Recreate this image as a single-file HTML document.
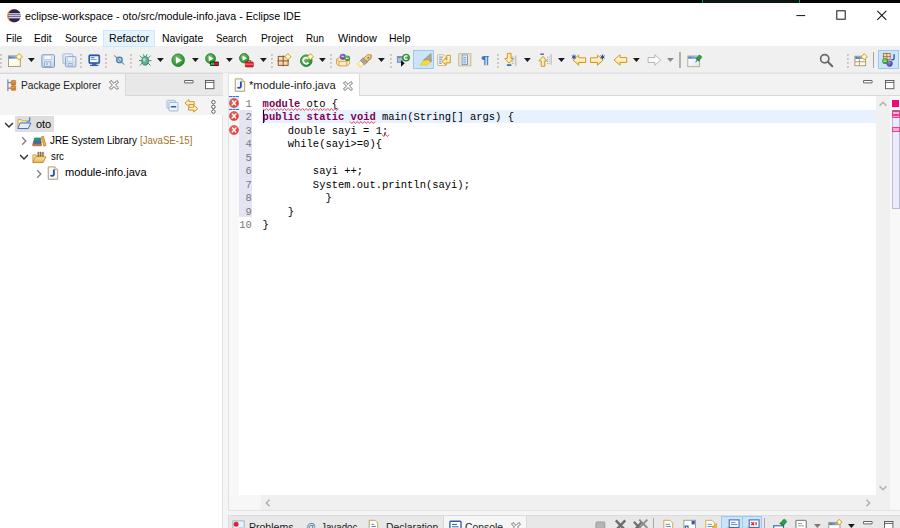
<!DOCTYPE html>
<html><head><meta charset="utf-8"><title>eclipse-workspace - oto/src/module-info.java - Eclipse IDE</title>
<style>
html,body{margin:0;padding:0;}
body{width:900px;height:528px;overflow:hidden;position:relative;background:#f0f0f0;font-family:'Liberation Sans', sans-serif;}
.a{position:absolute;}
.t{position:absolute;white-space:nowrap;line-height:14px;transform-origin:0 0;display:inline-block;font-family:'Liberation Sans', sans-serif;}
.cl{position:absolute;left:262.6px;white-space:pre;font:10.47px/13.44px 'Liberation Mono', monospace;color:#000;height:13.44px;}
.cl b{color:#7f0055;font-weight:bold;}
.ln{position:absolute;left:236.5px;width:15.4px;text-align:right;white-space:pre;font:10.47px/13.44px 'Liberation Mono', monospace;color:#787878;height:13.44px;}
.sq{text-decoration:underline wavy #e8203c;text-decoration-thickness:0.8px;text-underline-offset:1.5px;text-decoration-skip-ink:none;}
svg{position:absolute;overflow:visible;}
</style></head><body>
<!-- top black strip -->
<div class="a" style="left:0;top:0;width:900px;height:2.8px;background:#050505"></div>
<div class="a" style="left:702px;top:0;width:98px;height:2.8px;background:#0a1610;border-left:1px solid #0c9a3c;border-right:1px solid #0c9a3c;box-sizing:border-box"></div>
<!-- title + menu -->
<div class="a" style="left:0;top:2.8px;width:900px;height:43.4px;background:#fff"></div>
<!-- toolbar -->
<div class="a" style="left:0;top:46.2px;width:900px;height:26.6px;background:#f0f0f0"></div>
<div class="a" style="left:0;top:72.3px;width:900px;height:1px;background:#e6e6e6"></div>
<div class="a" style="left:0;top:73px;width:900px;height:460px;background:#f5f5f5"></div>
<div class="a" style="left:103.3px;top:29.6px;width:51.6px;height:17.2px;background:#e5f3ff;border:1px solid #cce8ff;box-sizing:border-box"></div>
<!-- left panel -->
<div class="a" style="left:0;top:73.3px;width:223.4px;height:460px;background:#fff;border-right:1px solid #e0e0e0;box-sizing:border-box"></div>
<div class="a" style="left:0;top:73.3px;width:222.6px;height:22.4px;background:#e8e8e8;border-bottom:1px solid #d9d9d9;border-top:1px solid #d9d9d9;box-sizing:border-box"></div>
<div class="a" style="left:0;top:73.3px;width:125.7px;height:22.6px;background:#f4f4f4;border-right:1px solid #d9d9d9;border-top:1px solid #d9d9d9;box-sizing:border-box"></div>
<div class="a" style="left:0;top:95.7px;width:222.6px;height:19.6px;background:#f4f4f4"></div>
<div class="a" style="left:15.1px;top:116.1px;width:38.9px;height:15.7px;background:#dedede"></div>
<!-- editor panel -->
<div class="a" style="left:228px;top:73.3px;width:680px;height:437.4px;background:#fff;border:1px solid #e2e2e2;box-sizing:border-box"></div>
<div class="a" style="left:229px;top:74.3px;width:680px;height:21.4px;background:#f2f2f2;border-bottom:1px solid #d9d9d9;box-sizing:border-box"></div>
<div class="a" style="left:229px;top:74.3px;width:131.3px;height:22px;background:#fff;border-right:1px solid #d9d9d9;box-sizing:border-box"></div>
<div class="a" style="left:229px;top:96.2px;width:10px;height:413.6px;background:#f8f8f8"></div>
<div class="a" style="left:239px;top:109.74px;width:12.7px;height:107.52px;background:#e4e4f4"></div>
<div class="a" style="left:261.5px;top:109.74px;width:614px;height:13.44px;background:#e8f2fe"></div>
<div class="a" style="left:262.6px;top:110.34px;width:1px;height:12.24px;background:#000"></div>
<!-- scrollbars -->
<div class="a" style="left:875.6px;top:96.2px;width:14.6px;height:414px;background:#f0f0f0"></div>
<div class="a" style="left:261.2px;top:495.2px;width:629px;height:15px;background:#f0f0f0"></div>
<div class="a" style="left:890.2px;top:96.2px;width:10px;height:414px;background:#f8f8f8"></div>
<div class="a" style="left:229px;top:495.2px;width:32.2px;height:15px;background:#f7f7f7"></div>
<!-- overview ruler -->
<div class="a" style="left:892.4px;top:100.2px;width:6.6px;height:6.4px;background:#f0087c"></div>
<div class="a" style="left:892px;top:110.4px;width:8px;height:98.2px;background:#ececf8;border-left:1px solid #b9b9e2;border-right:1px solid #b9b9e2;border-bottom:1px solid #b9b9e2;border-top:1px solid #777;box-sizing:border-box"></div>
<div class="a" style="left:892px;top:111.4px;width:8px;height:3.6px;background:#f9b4d6;border:1px solid #f23a98;box-sizing:border-box"></div>
<div class="a" style="left:892px;top:114.9px;width:8px;height:3.6px;background:#f9b4d6;border:1px solid #f23a98;box-sizing:border-box"></div>
<div class="a" style="left:892px;top:127.3px;width:8px;height:4.5px;background:#f9b4d6;border:1px solid #f23a98;box-sizing:border-box"></div>
<!-- bottom panel -->
<div class="a" style="left:228px;top:514.6px;width:680px;height:20px;background:#e8e8e8;border:1px solid #dcdcdc;box-sizing:border-box"></div>
<div class="a" style="left:443.4px;top:515.6px;width:84px;height:20px;background:#f6f6f6;border-left:1px solid #d9d9d9;border-right:1px solid #d9d9d9;box-sizing:border-box"></div>
<div class="cl" style="top:98.00px"><b>module</b> oto {</div><div class="ln" style="top:98.00px">1</div><div class="cl" style="top:111.44px"><b>public</b> <b>static</b> <b>void</b> main(String[] args) {</div><div class="ln" style="top:111.44px">2</div><div class="cl" style="top:124.88px">    double sayi = 1;</div><div class="ln" style="top:124.88px">3</div><div class="cl" style="top:138.32px">    while(sayi&gt;=0){</div><div class="ln" style="top:138.32px">4</div><div class="cl" style="top:151.76px"></div><div class="ln" style="top:151.76px">5</div><div class="cl" style="top:165.20px">        sayi ++;</div><div class="ln" style="top:165.20px">6</div><div class="cl" style="top:178.64px">        System.out.println(sayi);</div><div class="ln" style="top:178.64px">7</div><div class="cl" style="top:192.08px">          }</div><div class="ln" style="top:192.08px">8</div><div class="cl" style="top:205.52px">    }</div><div class="ln" style="top:205.52px">9</div><div class="cl" style="top:218.96px">}</div><div class="ln" style="top:218.96px">10</div>
<svg style="left:262.80px;top:107.70px" width="76.80" height="3"><polyline points="0.00,0.50 1.80,2.50 3.60,0.50 5.40,2.50 7.20,0.50 9.00,2.50 10.80,0.50 12.60,2.50 14.40,0.50 16.20,2.50 18.00,0.50 19.80,2.50 21.60,0.50 23.40,2.50 25.20,0.50 27.00,2.50 28.80,0.50 30.60,2.50 32.40,0.50 34.20,2.50 36.00,0.50 37.80,2.50 39.60,0.50 41.40,2.50 43.20,0.50 45.00,2.50 46.80,0.50 48.60,2.50 50.40,0.50 52.20,2.50 54.00,0.50 55.80,2.50 57.60,0.50 59.40,2.50 61.20,0.50 63.00,2.50 64.80,0.50 66.60,2.50 68.40,0.50 70.20,2.50 72.00,0.50 73.80,2.50 75.60,0.50" fill="none" stroke="#e4304c" stroke-width="0.85"/></svg><svg style="left:350.20px;top:120.70px" width="27.20" height="3"><polyline points="0.00,0.50 1.80,2.50 3.60,0.50 5.40,2.50 7.20,0.50 9.00,2.50 10.80,0.50 12.60,2.50 14.40,0.50 16.20,2.50 18.00,0.50 19.80,2.50 21.60,0.50 23.40,2.50 25.20,0.50" fill="none" stroke="#e4304c" stroke-width="0.85"/></svg><svg style="left:381.80px;top:134.40px" width="8.80" height="3"><polyline points="0.00,0.50 1.80,2.50 3.60,0.50 5.40,2.50 7.20,0.50" fill="none" stroke="#e4304c" stroke-width="0.85"/></svg>
<span class="t" style="left:25.40px;top:9.49px;font-size:10.7px;color:#000;transform:scaleX(1.0014);">eclipse-workspace - oto/src/module-info.java - Eclipse IDE</span><span class="t" style="left:5.50px;top:31.29px;font-size:10.7px;color:#000;transform:scaleX(0.9284);">File</span><span class="t" style="left:34.25px;top:31.29px;font-size:10.7px;color:#000;transform:scaleX(0.9500);">Edit</span><span class="t" style="left:64.50px;top:31.29px;font-size:10.7px;color:#000;transform:scaleX(0.9520);">Source</span><span class="t" style="left:109.25px;top:31.29px;font-size:10.7px;color:#000;transform:scaleX(0.9899);">Refactor</span><span class="t" style="left:161.75px;top:31.29px;font-size:10.7px;color:#000;transform:scaleX(0.9778);">Navigate</span><span class="t" style="left:216.25px;top:31.29px;font-size:10.7px;color:#000;transform:scaleX(0.9077);">Search</span><span class="t" style="left:260.50px;top:31.29px;font-size:10.7px;color:#000;transform:scaleX(0.9620);">Project</span><span class="t" style="left:306.25px;top:31.29px;font-size:10.7px;color:#000;transform:scaleX(0.9179);">Run</span><span class="t" style="left:337.50px;top:31.29px;font-size:10.7px;color:#000;transform:scaleX(1.0193);">Window</span><span class="t" style="left:389.25px;top:31.29px;font-size:10.7px;color:#000;transform:scaleX(0.9780);">Help</span><span class="t" style="left:20.90px;top:78.29px;font-size:10.7px;color:#222;transform:scaleX(0.9495);">Package Explorer</span><span class="t" style="left:36.00px;top:116.79px;font-size:10.7px;color:#000;transform:scaleX(1.0229);">oto</span><span class="t" style="left:49.90px;top:133.29px;font-size:10.7px;color:#000;transform:scaleX(0.9212);">JRE System Library</span><span class="t" style="left:140.00px;top:133.29px;font-size:10.7px;color:#a0742c;transform:scaleX(0.8983);">[JavaSE-15]</span><span class="t" style="left:50.60px;top:149.29px;font-size:10.7px;color:#000;transform:scaleX(0.9123);">src</span><span class="t" style="left:64.70px;top:165.29px;font-size:10.7px;color:#000;transform:scaleX(1.0405);">module-info.java</span><span class="t" style="left:249.00px;top:78.29px;font-size:10.7px;color:#222;transform:scaleX(1.0499);">*module-info.java</span><span class="t" style="left:249.20px;top:519.89px;font-size:10.7px;color:#222;transform:scaleX(0.9836);">Problems</span><span class="t" style="left:306.00px;top:519.89px;font-size:10.7px;color:#3a6ea5;transform:scaleX(0.8932);font-style:italic;">@</span><span class="t" style="left:321.40px;top:519.89px;font-size:10.7px;color:#222;transform:scaleX(0.9143);">Javadoc</span><span class="t" style="left:386.00px;top:519.89px;font-size:10.7px;color:#222;transform:scaleX(0.9674);">Declaration</span><span class="t" style="left:465.00px;top:519.89px;font-size:10.7px;color:#222;transform:scaleX(0.9689);">Console</span>
<svg width="0" height="0" style="left:0;top:0"><defs>
<linearGradient id="gY" x1="0" y1="0" x2="0" y2="1"><stop offset="0.1" stop-color="#fffdf0"/><stop offset="1" stop-color="#fcdc7c"/></linearGradient>
<linearGradient id="gYh" x1="0" y1="0" x2="1" y2="0"><stop offset="0.1" stop-color="#fffdf0"/><stop offset="1" stop-color="#fcd466"/></linearGradient>
<linearGradient id="gB" x1="0" y1="0" x2="1" y2="0"><stop offset="0" stop-color="#3b79c4"/><stop offset="1" stop-color="#9cc3ea"/></linearGradient>
<linearGradient id="gW" x1="0" y1="0" x2="1" y2="1"><stop offset="0.3" stop-color="#ffffff"/><stop offset="1" stop-color="#fbf3d4"/></linearGradient>
<radialGradient id="gG" cx="0.4" cy="0.35" r="0.7"><stop offset="0" stop-color="#74c464"/><stop offset="1" stop-color="#238430"/></radialGradient>
<radialGradient id="gP" cx="0.4" cy="0.35" r="0.7"><stop offset="0" stop-color="#9a84d8"/><stop offset="1" stop-color="#4a2f98"/></radialGradient>
<radialGradient id="gR" cx="0.4" cy="0.35" r="0.8"><stop offset="0" stop-color="#ec6a60"/><stop offset="1" stop-color="#d2362e"/></radialGradient>
<linearGradient id="gW2" x1="0" y1="0" x2="1" y2="1"><stop offset="0.2" stop-color="#ffffff"/><stop offset="1" stop-color="#d4e8f8"/></linearGradient>
<linearGradient id="gF" x1="0" y1="0" x2="0" y2="1"><stop offset="0" stop-color="#fde9a8"/><stop offset="1" stop-color="#e8b04c"/></linearGradient>
<linearGradient id="gS" x1="0" y1="0" x2="0" y2="1"><stop offset="0" stop-color="#eaf1f9"/><stop offset="1" stop-color="#c4d6ea"/></linearGradient>
</defs></svg>
<svg style="left:6.40px;top:7.60px" width="15.52" height="15.52" viewBox="0 0 16 16"><circle cx="8" cy="8" r="7" fill="#f7941e"/><circle cx="8.7" cy="8" r="6.7" fill="#2c2255"/><rect x="2.4" y="5.5" width="13.2" height="1.1" fill="#fff"/><rect x="2.2" y="7.5" width="13.4" height="1.1" fill="#fff"/><rect x="2.4" y="9.5" width="13.2" height="1.1" fill="#fff"/></svg>
<svg style="left:790px;top:6px" width="110" height="20" viewBox="0 0 110 20"><line x1="6.4" y1="9.6" x2="15.2" y2="9.6" stroke="#111" stroke-width="1"/><rect x="46.8" y="4.8" width="8.4" height="8.4" fill="none" stroke="#111" stroke-width="1"/><path d="M87.3,4.9 L96.3,13.9 M96.3,4.9 L87.3,13.9" stroke="#111" stroke-width="1.05"/></svg>
<svg style="left:0.20px;top:53.50px" width="2" height="14.4" viewBox="0 0 2 14.4"><rect x="0" y="0.0" width="1.8" height="1.9" fill="#cbc2b0"/><rect x="0" y="4.0" width="1.8" height="1.9" fill="#cbc2b0"/><rect x="0" y="8.0" width="1.8" height="1.9" fill="#cbc2b0"/><rect x="0" y="12.0" width="1.8" height="1.9" fill="#cbc2b0"/></svg>
<svg style="left:7.60px;top:53.40px" width="14.34" height="14.34" viewBox="0 0 16 16"><rect x="0.6" y="3.2" width="13.2" height="11.8" fill="url(#gW)" stroke="#a89468" stroke-width="1"/><rect x="1.1" y="3.7" width="12.2" height="2.6" fill="url(#gB)"/><path d="M12.4,0.41999999999999993 L14.101,2.499 L16.18,4.2 L14.101,5.901 L12.4,7.98 L10.699,5.901 L8.620000000000001,4.2 L10.699,2.499Z" fill="#fff1a8" stroke="#c9a030" stroke-width="1"/><path d="M12.4,1.932 L13.2316,4.2 L12.4,6.468 L11.5684,4.2Z" fill="#fffef4"/></svg>
<svg style="left:27.60px;top:58.00px" width="6.8" height="4" viewBox="0 0 7 4"><path d="M0,0 L7,0 L3.5,4Z" fill="#1a1a1a"/></svg>
<svg style="left:41.30px;top:53.40px" width="14.34" height="14.34" viewBox="0 0 16 16"><g transform="translate(0.5,1.5)" opacity="1"><path d="M0.5,1.5 q0,-1 1,-1 h12 q1,0 1,1 v12 q0,1 -1,1 h-12 q-1,0 -1,-1z" fill="url(#gS)" stroke="#7295c6" stroke-width="1.1"/><rect x="2.8" y="1" width="8.4" height="4.6" fill="#f6f9fd" stroke="#a9c0dc" stroke-width="0.7"/><rect x="3.6" y="8.4" width="6.8" height="5.1" fill="#dfe9f5" stroke="#7f9fc6" stroke-width="0.8"/><rect x="5.4" y="9.6" width="1.8" height="2.6" fill="#9db6d6"/></g></svg>
<svg style="left:61.60px;top:53.40px" width="14.34" height="14.34" viewBox="0 0 16 16"><g transform="translate(0.5,0.5)" opacity="0.6"><path d="M0.5,1.5 q0,-1 1,-1 h9 q1,0 1,1 v9 q0,1 -1,1 h-9 q-1,0 -1,-1z" fill="url(#gS)" stroke="#7295c6" stroke-width="1.1"/><rect x="2.8" y="1" width="5.4" height="4.6" fill="#f6f9fd" stroke="#a9c0dc" stroke-width="0.7"/><rect x="3.6" y="8.4" width="3.8" height="2.0999999999999996" fill="#dfe9f5" stroke="#7f9fc6" stroke-width="0.8"/><rect x="5.4" y="9.6" width="1.8" height="2.6" fill="#9db6d6"/></g><g transform="translate(3.5,3.5)" opacity="0.8"><path d="M0.5,1.5 q0,-1 1,-1 h9.5 q1,0 1,1 v9.5 q0,1 -1,1 h-9.5 q-1,0 -1,-1z" fill="url(#gS)" stroke="#7295c6" stroke-width="1.1"/><rect x="2.8" y="1" width="5.9" height="4.6" fill="#f6f9fd" stroke="#a9c0dc" stroke-width="0.7"/><rect x="3.6" y="8.4" width="4.3" height="2.5999999999999996" fill="#dfe9f5" stroke="#7f9fc6" stroke-width="0.8"/><rect x="5.4" y="9.6" width="1.8" height="2.6" fill="#9db6d6"/></g></svg>
<svg style="left:80.40px;top:53.50px" width="2" height="14.4" viewBox="0 0 2 14.4"><rect x="0" y="0.0" width="1.8" height="1.9" fill="#cbc2b0"/><rect x="0" y="4.0" width="1.8" height="1.9" fill="#cbc2b0"/><rect x="0" y="8.0" width="1.8" height="1.9" fill="#cbc2b0"/><rect x="0" y="12.0" width="1.8" height="1.9" fill="#cbc2b0"/></svg>
<svg style="left:87.60px;top:53.70px" width="14.34" height="14.34" viewBox="0 0 16 16"><g transform="scale(0.9,0.97)"><rect x="1" y="1" width="13.5" height="10" rx="1.3" fill="#2f62ad" stroke="#1f4a8c" stroke-width="0.8"/><rect x="2.6" y="2.6" width="10.3" height="6.8" fill="#f4f8fd"/><rect x="3.6" y="3.8" width="4.4" height="1" fill="#2f62ad"/><rect x="3.6" y="5.8" width="7" height="1" fill="#6c93c9"/><rect x="5" y="11" width="5.5" height="1.4" fill="#1f4a8c"/><rect x="2.6" y="12.4" width="10.3" height="1.5" fill="#2f62ad"/></g></svg>
<svg style="left:105.40px;top:53.50px" width="2" height="14.4" viewBox="0 0 2 14.4"><rect x="0" y="0.0" width="1.8" height="1.9" fill="#cbc2b0"/><rect x="0" y="4.0" width="1.8" height="1.9" fill="#cbc2b0"/><rect x="0" y="8.0" width="1.8" height="1.9" fill="#cbc2b0"/><rect x="0" y="12.0" width="1.8" height="1.9" fill="#cbc2b0"/></svg>
<svg style="left:112.60px;top:53.40px" width="14.34" height="14.34" viewBox="0 0 16 16"><circle cx="7.2" cy="7.7" r="3.0" fill="#d6e6f6" stroke="#3f80c0" stroke-width="1.6"/><line x1="1.3" y1="2.7" x2="12.7" y2="13" stroke="#8a8a8a" stroke-width="1.25"/></svg>
<svg style="left:130.40px;top:53.50px" width="2" height="14.4" viewBox="0 0 2 14.4"><rect x="0" y="0.0" width="1.8" height="1.9" fill="#cbc2b0"/><rect x="0" y="4.0" width="1.8" height="1.9" fill="#cbc2b0"/><rect x="0" y="8.0" width="1.8" height="1.9" fill="#cbc2b0"/><rect x="0" y="12.0" width="1.8" height="1.9" fill="#cbc2b0"/></svg>
<svg style="left:137.60px;top:53.40px" width="14.34" height="14.34" viewBox="0 0 16 16"><g stroke="#3f8f73" stroke-width="1.1" fill="none"><path d="M2,3 L5,6 M14,3 L11,6 M1,8.5 H4.5 M15,8.5 H11.5 M2,14 L5,11 M14,14 L11,11 M6,1.5 L7,4 M10,1.5 L9,4"/></g><ellipse cx="8" cy="8.8" rx="3.7" ry="4.8" fill="#5fae8f" stroke="#2f7d62" stroke-width="0.9"/><ellipse cx="7" cy="7.6" rx="1.6" ry="2.4" fill="#bfe3d2" opacity="0.8"/></svg>
<svg style="left:157.40px;top:58.00px" width="6.8" height="4" viewBox="0 0 7 4"><path d="M0,0 L7,0 L3.5,4Z" fill="#1a1a1a"/></svg>
<svg style="left:171.20px;top:53.40px" width="14.34" height="14.34" viewBox="0 0 16 16"><circle cx="8" cy="8" r="7" fill="url(#gG)" stroke="#1d7a2a" stroke-width="0.9"/><path d="M5.48,4.08 L12.2,8 L5.48,11.92Z" fill="#fff"/></svg>
<svg style="left:191.60px;top:58.00px" width="6.8" height="4" viewBox="0 0 7 4"><path d="M0,0 L7,0 L3.5,4Z" fill="#1a1a1a"/></svg>
<svg style="left:204.80px;top:53.40px" width="14.34" height="14.34" viewBox="0 0 16 16"><circle cx="6.2" cy="6.2" r="5.5" fill="url(#gG)" stroke="#1d7a2a" stroke-width="0.9"/><path d="M4.220000000000001,3.12 L9.5,6.2 L4.220000000000001,9.280000000000001Z" fill="#fff"/><rect x="5.8" y="9.6" width="9.6" height="4.8" fill="#1a1a1a"/><rect x="6.6" y="10.6" width="3.6" height="2.8" fill="#2fbe3a"/><rect x="10.2" y="10.6" width="4.4" height="2.8" fill="#e8101a"/></svg>
<svg style="left:226.00px;top:58.00px" width="6.8" height="4" viewBox="0 0 7 4"><path d="M0,0 L7,0 L3.5,4Z" fill="#1a1a1a"/></svg>
<svg style="left:238.80px;top:53.40px" width="14.34" height="14.34" viewBox="0 0 16 16"><circle cx="5.8" cy="5.8" r="5.2" fill="url(#gG)" stroke="#1d7a2a" stroke-width="0.9"/><path d="M3.928,2.8879999999999995 L8.92,5.8 L3.928,8.712Z" fill="#fff"/><rect x="7" y="10" width="9" height="5.6" rx="0.8" fill="#e0242c" stroke="#a81018" stroke-width="0.7"/><path d="M9.8,10 v-1.4 h3.4 v1.4" fill="none" stroke="#a81018" stroke-width="1"/><rect x="7" y="12" width="9" height="0.9" fill="#f7a0a0"/></svg>
<svg style="left:260.00px;top:58.00px" width="6.8" height="4" viewBox="0 0 7 4"><path d="M0,0 L7,0 L3.5,4Z" fill="#1a1a1a"/></svg>
<svg style="left:271.00px;top:53.50px" width="2" height="14.4" viewBox="0 0 2 14.4"><rect x="0" y="0.0" width="1.8" height="1.9" fill="#cbc2b0"/><rect x="0" y="4.0" width="1.8" height="1.9" fill="#cbc2b0"/><rect x="0" y="8.0" width="1.8" height="1.9" fill="#cbc2b0"/><rect x="0" y="12.0" width="1.8" height="1.9" fill="#cbc2b0"/></svg>
<svg style="left:277.40px;top:53.40px" width="14.34" height="14.34" viewBox="0 0 16 16"><rect x="1.4" y="3.8" width="11" height="10" fill="#f3dcae" stroke="#8e5230" stroke-width="1.1"/><path d="M6.9,2.8 v12 M0.4,8.8 h13" stroke="#8e5230" stroke-width="1.1" fill="none"/><path d="M12.2,0.528 L13.8524,2.5476 L15.872,4.2 L13.8524,5.8524 L12.2,7.872 L10.5476,5.8524 L8.527999999999999,4.2 L10.5476,2.5476Z" fill="#fff1a8" stroke="#c9a030" stroke-width="1"/><path d="M12.2,1.9968000000000004 L13.00784,4.2 L12.2,6.4032 L11.392159999999999,4.2Z" fill="#fffef4"/></svg>
<svg style="left:299.60px;top:53.40px" width="14.34" height="14.34" viewBox="0 0 16 16"><circle cx="7" cy="8.6" r="6.5" fill="url(#gG)" stroke="#1d7a2a" stroke-width="0.9"/><path d="M9.6,6.5 A3.4,3.4 0 1 0 9.6,10.7" fill="none" stroke="#fff" stroke-width="2"/><path d="M11.6,0.6360000000000001 L13.2038,2.5962 L15.164,4.2 L13.2038,5.803800000000001 L11.6,7.764 L9.9962,5.803800000000001 L8.036,4.2 L9.9962,2.5962Z" fill="#fff1a8" stroke="#c9a030" stroke-width="1"/><path d="M11.6,2.0616000000000003 L12.384079999999999,4.2 L11.6,6.3384 L10.81592,4.2Z" fill="#fffef4"/></svg>
<svg style="left:319.20px;top:58.00px" width="6.8" height="4" viewBox="0 0 7 4"><path d="M0,0 L7,0 L3.5,4Z" fill="#1a1a1a"/></svg>
<svg style="left:330.40px;top:53.50px" width="2" height="14.4" viewBox="0 0 2 14.4"><rect x="0" y="0.0" width="1.8" height="1.9" fill="#cbc2b0"/><rect x="0" y="4.0" width="1.8" height="1.9" fill="#cbc2b0"/><rect x="0" y="8.0" width="1.8" height="1.9" fill="#cbc2b0"/><rect x="0" y="12.0" width="1.8" height="1.9" fill="#cbc2b0"/></svg>
<svg style="left:336.00px;top:53.40px" width="14.34" height="14.34" viewBox="0 0 16 16"><path d="M0.6,7 l3.4,-2.4 h8.6 l2.4,2.4 v5.2 l-3,2.2 h-8.6 l-2.8,-2.2z" fill="#fdebc0" stroke="#d59a44" stroke-width="1" stroke-linejoin="round"/><path d="M0.6,7 l2.8,2.4 h8.6 l3,-2.4 M3.4,9.4 v5 M12,9.4 v5" fill="none" stroke="#d59a44" stroke-width="0.9"/><circle cx="7.6" cy="4.2" r="3.4" fill="url(#gP)"/><circle cx="12.6" cy="6" r="3.1" fill="url(#gG)"/><rect x="11" y="5.5" width="3.2" height="0.9" fill="#e8ffe8"/><rect x="6" y="3.7" width="3.2" height="0.9" fill="#eee8ff"/></svg>
<svg style="left:357.60px;top:53.40px" width="14.34" height="14.34" viewBox="0 0 16 16"><g transform="rotate(-40 8 8)"><rect x="-1" y="5.6" width="5" height="4.8" fill="#fff9c8" stroke="#e8c23c" stroke-width="0.8"/><rect x="4" y="4.6" width="4.2" height="6.8" fill="#aaa6a2" stroke="#86827c" stroke-width="0.7"/><path d="M8.2,5.2 h6 l2.8,2.8 l-2.8,2.8 h-6z" fill="url(#gF)" stroke="#b07a22" stroke-width="0.9"/><circle cx="12.4" cy="8" r="1" fill="#3f7ac0"/></g></svg>
<svg style="left:378.20px;top:58.00px" width="6.8" height="4" viewBox="0 0 7 4"><path d="M0,0 L7,0 L3.5,4Z" fill="#1a1a1a"/></svg>
<svg style="left:389.60px;top:53.50px" width="2" height="14.4" viewBox="0 0 2 14.4"><rect x="0" y="0.0" width="1.8" height="1.9" fill="#cbc2b0"/><rect x="0" y="4.0" width="1.8" height="1.9" fill="#cbc2b0"/><rect x="0" y="8.0" width="1.8" height="1.9" fill="#cbc2b0"/><rect x="0" y="12.0" width="1.8" height="1.9" fill="#cbc2b0"/></svg>
<svg style="left:396.00px;top:53.40px" width="14.34" height="14.34" viewBox="0 0 16 16"><rect x="1.5" y="5" width="6" height="5.4" fill="#a9bfe0" stroke="#5d7fb8" stroke-width="0.9"/><rect x="1" y="3.4" width="7" height="1.8" fill="#7d8aa8"/><path d="M5.6,8 v7.4 l4.2,-3.9z" fill="#111"/><circle cx="11.2" cy="5.2" r="4" fill="url(#gG)" stroke="#1d7a2a" stroke-width="0.7"/><path d="M12.8,3.9 A2,2 0 1 0 12.8,6.5" fill="none" stroke="#fff" stroke-width="1.3"/></svg>
<div class="a" style="left:413.20px;top:50.20px;width:20.80px;height:18.80px;background:#cce4f7;border:1px solid #99c9ef;box-sizing:border-box"></div>
<svg style="left:416.60px;top:53.40px" width="14.34" height="14.34" viewBox="0 0 16 16"><path d="M0.9,13.9 L5,13 L6.4,14.4 Z" fill="#f3d23a"/><path d="M4.3,12.9 L7,8.1 L13.2,7.4 L15.2,10.2 L11.1,13.8 Z" fill="#f7da3e" stroke="#e0bc20" stroke-width="0.6" stroke-linejoin="round"/><path d="M7,8.1 L15.7,0.4 L16.2,9.4 L15.2,10.2 L13.2,7.4 Z" fill="#aea892" stroke="#918a74" stroke-width="0.6" stroke-linejoin="round"/></svg>
<svg style="left:436.80px;top:53.40px" width="14.34" height="14.34" viewBox="0 0 16 16"><path d="M0.8,2 h7 l2.2,2.2 v9.8 h-9.2z" fill="#fbf6e6" stroke="#c4b07c" stroke-width="0.9"/><path d="M2.4,4.6 h4.6 M2.4,6.9 h3.4 M2.4,9.2 h2.4 M2.4,11.5 h3" stroke="#5d86c4" stroke-width="1"/><path d="M11,2.6 h3.8 v8.4 h-4.6 v2.4 l-4.8,-4 l4.8,-4 v2.4 h0.8z" fill="url(#gY)" stroke="#d0941c" stroke-width="1.1" stroke-linejoin="round"/></svg>
<svg style="left:457.60px;top:53.40px" width="14.34" height="14.34" viewBox="0 0 16 16"><rect x="0.8" y="0.8" width="13.6" height="13.6" fill="#f2ead2" stroke="#c2ae7c" stroke-width="0.9"/><rect x="4.6" y="2.2" width="6" height="10.8" fill="#fdfdff" stroke="#5d86c4" stroke-width="0.9"/><path d="M2.4,2.4 v10.6 M12.8,2.4 v10.6" stroke="#c9d6ea" stroke-width="1" stroke-dasharray="1.2 1"/><path d="M5.8,4.8 h3.6 M5.8,6.9 h3.6 M5.8,9 h3.6 M5.8,11.1 h3.6" stroke="#5d86c4" stroke-width="1"/></svg>
<span class="a" style="left:480.8px;top:53.4px;font:bold 11.6px/14px 'Liberation Sans',sans-serif;color:#3a76bd;transform:scaleX(1.3);transform-origin:0 0">¶</span>
<svg style="left:497.00px;top:53.50px" width="2" height="14.4" viewBox="0 0 2 14.4"><rect x="0" y="0.0" width="1.8" height="1.9" fill="#cbc2b0"/><rect x="0" y="4.0" width="1.8" height="1.9" fill="#cbc2b0"/><rect x="0" y="8.0" width="1.8" height="1.9" fill="#cbc2b0"/><rect x="0" y="12.0" width="1.8" height="1.9" fill="#cbc2b0"/></svg>
<svg style="left:503.60px;top:53.40px" width="14.34" height="14.34" viewBox="0 0 16 16"><path d="M8.6,4.6 h3 M8.6,7 h3 M8.6,9.4 h3 M8.6,11.8 h3" stroke="#8fa9d0" stroke-width="1" stroke-dasharray="1.4 0.8"/><rect x="12.6" y="2.6" width="1.2" height="12" fill="#b8b8b8"/><path d="M5.8,11.4 L0.8999999999999995,6.2 L3.6999999999999997,6.2 L3.6999999999999997,0.40000000000000036 L7.9,0.40000000000000036 L7.9,6.2 L10.7,6.2Z" fill="url(#gYh)" stroke="#d0941c" stroke-width="1.1" stroke-linejoin="round"/><rect x="3.2" y="12.6" width="5" height="1.8" fill="#2d5fa8"/></svg>
<svg style="left:524.00px;top:58.00px" width="6.8" height="4" viewBox="0 0 7 4"><path d="M0,0 L7,0 L3.5,4Z" fill="#1a1a1a"/></svg>
<svg style="left:537.60px;top:53.40px" width="14.34" height="14.34" viewBox="0 0 16 16"><g transform="translate(1.5,0)"><path d="M8.6,4.6 h3 M8.6,7 h3 M8.6,9.4 h3 M8.6,11.8 h3" stroke="#8fa9d0" stroke-width="1" stroke-dasharray="1.4 0.8"/><rect x="12.6" y="1" width="1.2" height="12" fill="#b8b8b8"/></g><path d="M5.6,3.8 L1.0,8.8 L3.5999999999999996,8.8 L3.5999999999999996,14.8 L7.6,14.8 L7.6,8.8 L10.2,8.8Z" fill="url(#gYh)" stroke="#d0941c" stroke-width="1.1" stroke-linejoin="round"/><rect x="2.6" y="0.6" width="4" height="1.5" fill="#2d5fa8"/></svg>
<svg style="left:558.00px;top:58.00px" width="6.8" height="4" viewBox="0 0 7 4"><path d="M0,0 L7,0 L3.5,4Z" fill="#1a1a1a"/></svg>
<svg style="left:570.60px;top:53.40px" width="14.34" height="14.34" viewBox="0 0 16 16"><path d="M2.4,8 L8.6,2.4000000000000004 L8.6,5.4 L16.4,5.4 L16.4,10.6 L8.6,10.6 L8.6,13.6Z" fill="url(#gY)" stroke="#d0941c" stroke-width="1.1" stroke-linejoin="round"/><line x1="3.20" y1="1.70" x2="3.20" y2="7.10" stroke="#2a4a8a" stroke-width="1.1"/><line x1="0.86" y1="3.05" x2="5.54" y2="5.75" stroke="#2a4a8a" stroke-width="1.1"/><line x1="5.54" y1="3.05" x2="0.86" y2="5.75" stroke="#2a4a8a" stroke-width="1.1"/></svg>
<svg style="left:590.20px;top:53.40px" width="14.34" height="14.34" viewBox="0 0 16 16"><path d="M14.6,8 L8.399999999999999,2.4000000000000004 L8.399999999999999,5.4 L0.5999999999999996,5.4 L0.5999999999999996,10.6 L8.399999999999999,10.6 L8.399999999999999,13.6Z" fill="url(#gY)" stroke="#d0941c" stroke-width="1.1" stroke-linejoin="round"/><line x1="14.00" y1="1.70" x2="14.00" y2="7.10" stroke="#2a4a8a" stroke-width="1.1"/><line x1="11.66" y1="3.05" x2="16.34" y2="5.75" stroke="#2a4a8a" stroke-width="1.1"/><line x1="16.34" y1="3.05" x2="11.66" y2="5.75" stroke="#2a4a8a" stroke-width="1.1"/></svg>
<svg style="left:612.60px;top:53.40px" width="14.34" height="14.34" viewBox="0 0 16 16"><path d="M1.2,7.8 L7.8,2.0 L7.8,5.1 L15.399999999999999,5.1 L15.399999999999999,10.5 L7.8,10.5 L7.8,13.6Z" fill="url(#gY)" stroke="#d0941c" stroke-width="1.1" stroke-linejoin="round"/></svg>
<svg style="left:633.20px;top:58.00px" width="6.8" height="4" viewBox="0 0 7 4"><path d="M0,0 L7,0 L3.5,4Z" fill="#1a1a1a"/></svg>
<svg style="left:647.00px;top:53.40px" width="14.34" height="14.34" viewBox="0 0 16 16"><path d="M15.4,7.8 L8.8,2.0 L8.8,5.1 L1.200000000000001,5.1 L1.200000000000001,10.5 L8.8,10.5 L8.8,13.6Z" fill="#fbfbfb" stroke="#b4b4b4" stroke-width="1.1" stroke-linejoin="round"/></svg>
<svg style="left:667.40px;top:58.00px" width="6.8" height="4" viewBox="0 0 7 4"><path d="M0,0 L7,0 L3.5,4Z" fill="#8a8a8a"/></svg>
<div class="a" style="left:679.00px;top:52.00px;width:1.6px;height:15.80px;background:#b2b2b2"></div>
<svg style="left:687.20px;top:53.40px" width="14.34" height="14.34" viewBox="0 0 16 16"><rect x="0.9" y="3.3" width="13" height="12" fill="url(#gW2)" stroke="#b8a878" stroke-width="1"/><rect x="1.4" y="3.8" width="12" height="2.6" fill="url(#gB)"/><g transform="translate(1.5,2.2) rotate(40 11.4 4)"><rect x="9.4" y="0.2" width="4" height="5" rx="1" fill="#2f9e44" stroke="#1b7a30" stroke-width="0.6"/><rect x="8.6" y="5" width="5.6" height="1.3" fill="#1b7a30"/><rect x="11" y="6.2" width="0.9" height="3" fill="#444"/></g></svg>
<svg style="left:818.60px;top:53.40px" width="14.34" height="14.34" viewBox="0 0 16 16"><circle cx="6.4" cy="6.4" r="4.6" fill="none" stroke="#6a6a6a" stroke-width="1.9"/><line x1="9.8" y1="9.8" x2="14.8" y2="14.8" stroke="#6a6a6a" stroke-width="2.3" stroke-linecap="round"/></svg>
<svg style="left:847.40px;top:53.50px" width="2" height="14.4" viewBox="0 0 2 14.4"><rect x="0" y="0.0" width="1.8" height="1.9" fill="#cbc2b0"/><rect x="0" y="4.0" width="1.8" height="1.9" fill="#cbc2b0"/><rect x="0" y="8.0" width="1.8" height="1.9" fill="#cbc2b0"/><rect x="0" y="12.0" width="1.8" height="1.9" fill="#cbc2b0"/></svg>
<svg style="left:853.60px;top:53.40px" width="14.34" height="14.34" viewBox="0 0 16 16"><rect x="1" y="3.6" width="12" height="10.6" fill="#fffdf0" stroke="#a89468" stroke-width="1"/><rect x="1.5" y="4.1" width="11" height="2.6" fill="url(#gB)"/><path d="M1,9.8 h12 M6,6.8 v7.4" stroke="#a89468" stroke-width="1"/><path d="M11.4,0.6360000000000001 L13.0038,2.5962 L14.964,4.2 L13.0038,5.803800000000001 L11.4,7.764 L9.7962,5.803800000000001 L7.836,4.2 L9.7962,2.5962Z" fill="#fff1a8" stroke="#c9a030" stroke-width="1"/><path d="M11.4,2.0616000000000003 L12.18408,4.2 L11.4,6.3384 L10.615920000000001,4.2Z" fill="#fffef4"/></svg>
<div class="a" style="left:873.00px;top:52.00px;width:1.3px;height:15.80px;background:#a4a4a4"></div>
<div class="a" style="left:878.00px;top:50.20px;width:20.80px;height:18.80px;background:#cce4f7;border:1px solid #99c9ef;box-sizing:border-box"></div>
<svg style="left:881.40px;top:53.40px" width="14.34" height="14.34" viewBox="0 0 16 16"><g transform="translate(1.8,-2.0) scale(0.68)"><rect x="1.4" y="3.8" width="11" height="10" fill="#f3dcae" stroke="#8e5230" stroke-width="1.1"/><path d="M6.9,2.8 v12 M0.4,8.8 h13" stroke="#8e5230" stroke-width="1.1" fill="none"/></g><path d="M14.6,1.4 v4.4 q0,1.8 -1.8,1.8 q-0.9,0 -1.3,-0.5" fill="none" stroke="#2d5fa8" stroke-width="1.6"/><circle cx="9.6" cy="11.8" r="3.5" fill="url(#gP)"/><circle cx="4.6" cy="9" r="3.4" fill="url(#gG)"/><rect x="2.8" y="8.6" width="3.4" height="0.9" fill="#e8ffe8"/></svg>
<svg style="left:6.60px;top:78.60px" width="14.34" height="14.34" viewBox="0 0 16 16"><path d="M1.0,0.4 v13.2 M1,4.1 h3.6 M1,10.2 h3.6" stroke="#6a7088" stroke-width="1.1" fill="none"/><rect x="4.7" y="1.6" width="5" height="5" rx="0.5" fill="#d08434" stroke="#b0641c" stroke-width="0.6"/><rect x="4.7" y="7.6" width="5" height="5" rx="0.5" fill="#d08434" stroke="#b0641c" stroke-width="0.6"/><path d="M4.9,3.3 h4.6 M4.9,9.3 h4.6" stroke="#e8a860" stroke-width="0.8"/></svg>
<svg style="left:107.90px;top:79.40px" width="12" height="12" viewBox="-6 -6 12 12"><path d="M-4.5,-2.95 L-2.95,-4.5 L0,-1.55 L2.95,-4.5 L4.5,-2.95 L1.55,0 L4.5,2.95 L2.95,4.5 L0,1.55 L-2.95,4.5 L-4.5,2.95 L-1.55,0Z" fill="#fdfdfd" stroke="#5c5c5c" stroke-width="0.9" stroke-linejoin="round"/></svg>
<svg style="left:184.40px;top:80.30px" width="10" height="4" viewBox="0 0 10 4"><rect x="0.5" y="0.5" width="8.6" height="2.4" rx="0.2" fill="#fff" stroke="#555" stroke-width="0.9"/></svg>
<svg style="left:205.00px;top:79.90px" width="10" height="10" viewBox="0 0 10 10"><rect x="0.5" y="0.5" width="8.4" height="8.2" fill="#fff" stroke="#555" stroke-width="0.9"/><line x1="0.5" y1="2.4" x2="8.9" y2="2.4" stroke="#555" stroke-width="0.9"/></svg>
<svg style="left:165.60px;top:99.40px" width="14.34" height="14.34" viewBox="0 0 16 16"><rect x="1" y="1.4" width="9.6" height="9" rx="1" fill="#dbe6f4" stroke="#9cb4d4" stroke-width="0.9"/><rect x="3.4" y="3.8" width="10" height="9.6" rx="1" fill="#eef4fb" stroke="#8fa9cf" stroke-width="0.9"/><rect x="5.4" y="7.8" width="6" height="1.7" fill="#2d5fa8"/></svg>
<svg style="left:184.40px;top:99.20px" width="14.34" height="14.34" viewBox="0 0 16 16"><path d="M1,4.6 L5.6,0.7999999999999998 L5.6,2.9999999999999996 L11.4,2.9999999999999996 L11.4,6.199999999999999 L5.6,6.199999999999999 L5.6,8.399999999999999Z" fill="url(#gY)" stroke="#d0941c" stroke-width="1.1" stroke-linejoin="round"/><path d="M15.4,10.8 L10.8,7.000000000000001 L10.8,9.200000000000001 L5.0,9.200000000000001 L5.0,12.4 L10.8,12.4 L10.8,14.600000000000001Z" fill="url(#gY)" stroke="#d0941c" stroke-width="1.1" stroke-linejoin="round"/></svg>
<svg style="left:209.6px;top:99.6px" width="7" height="14" viewBox="0 0 7 14"><g fill="#fff" stroke="#5a5a5a" stroke-width="1"><circle cx="3.4" cy="2.2" r="1.75"/><circle cx="3.4" cy="6.9" r="1.75"/><circle cx="3.4" cy="11.6" r="1.75"/></g></svg>
<svg style="left:3.30px;top:118.60px" width="12" height="12" viewBox="-6 -6 12 12"><polyline points="-3.9,-1.95 0,1.95 3.9,-1.95" fill="none" stroke="#333" stroke-width="1.5"/></svg>
<svg style="left:18.00px;top:135.40px" width="12" height="12" viewBox="-6 -6 12 12"><polyline points="-1.85,-3.7 1.85,0 -1.85,3.7" fill="none" stroke="#808080" stroke-width="1.3"/></svg>
<svg style="left:17.80px;top:150.80px" width="12" height="12" viewBox="-6 -6 12 12"><polyline points="-3.9,-1.95 0,1.95 3.9,-1.95" fill="none" stroke="#333" stroke-width="1.5"/></svg>
<svg style="left:32.60px;top:167.60px" width="12" height="12" viewBox="-6 -6 12 12"><polyline points="-1.85,-3.7 1.85,0 -1.85,3.7" fill="none" stroke="#808080" stroke-width="1.3"/></svg>
<svg style="left:17.00px;top:116.20px" width="14.34" height="14.34" viewBox="0 0 16 16"><path d="M1,12.6 V4 h3.8 l1,1.3 h5 v2.4" fill="#fbeaa8" stroke="#c9a040" stroke-width="0.9"/><path d="M0.9,14 l2.6,-6.2 h12 l-3,6.2z" fill="#e3edfa" stroke="#3f6fc0" stroke-width="1.1" stroke-linejoin="round"/><path d="M14.2,1.4 v3 q0,1.5 -1.5,1.5 q-0.8,0 -1.1,-0.4" fill="none" stroke="#3f6fc0" stroke-width="1.25"/></svg>
<svg style="left:32.00px;top:133.60px" width="14.34" height="14.34" viewBox="0 0 16 16"><rect x="0.8" y="10.4" width="9.8" height="2.8" rx="0.5" fill="#cc7238" stroke="#8e4a1c" stroke-width="0.6"/><rect x="1.6" y="7.4" width="8.6" height="2.8" rx="0.5" fill="#4a6cae" stroke="#2a4a88" stroke-width="0.6"/><rect x="2.4" y="4.4" width="7.6" height="2.8" rx="0.5" fill="#2f9a72" stroke="#1a6e4c" stroke-width="0.6"/><path d="M10.4,3.2 l2.4,-0.8 l2.8,10.4 l-2.4,0.8z" fill="#f6ac3c" stroke="#b4701a" stroke-width="0.7"/></svg>
<svg style="left:32.00px;top:149.60px" width="14.34" height="14.34" viewBox="0 0 16 16"><path d="M1,13 V5.4 h3.4 l1,1.3 h3" fill="#fbeaa8" stroke="#b98a30" stroke-width="0.9"/><path d="M0.9,14 l2.8,-6.4 h11.8 l-3,6.4z" fill="url(#gF)" stroke="#b98a30" stroke-width="1" stroke-linejoin="round"/><path d="M7,2 v5.4 M9.6,2 v5.4 M12.2,2 v5.4 M6,3.4 h7.6 M6,5.8 h7.6" stroke="#8a5a22" stroke-width="1" fill="none"/></svg>
<svg style="left:46.40px;top:165.60px" width="14.34" height="14.34" viewBox="0 0 16 16"><g transform="translate(0,0)"><path d="M2.5,1 h7.5 l3,3 v10.8 h-10.5z" fill="#f4f8fd" stroke="#b39b62" stroke-width="1.1"/><path d="M10,1 v3 h3" fill="#f3e6b8" stroke="#b39b62" stroke-width="0.8"/><path d="M8.8,4 v5 q0,2 -2,2 q-1.2,0 -1.7,-0.7" fill="none" stroke="#274f9c" stroke-width="2"/></g></svg>
<svg style="left:233.00px;top:77.80px" width="14.34" height="14.34" viewBox="0 0 16 16"><g transform="translate(0,0)"><path d="M2.5,1 h7.5 l3,3 v10.8 h-10.5z" fill="#f4f8fd" stroke="#b39b62" stroke-width="1.1"/><path d="M10,1 v3 h3" fill="#f3e6b8" stroke="#b39b62" stroke-width="0.8"/><path d="M8.8,4 v5 q0,2 -2,2 q-1.2,0 -1.7,-0.7" fill="none" stroke="#274f9c" stroke-width="2"/></g></svg>
<svg style="left:342.00px;top:79.80px" width="12" height="12" viewBox="-6 -6 12 12"><path d="M-4.5,-2.95 L-2.95,-4.5 L0,-1.55 L2.95,-4.5 L4.5,-2.95 L1.55,0 L4.5,2.95 L2.95,4.5 L0,1.55 L-2.95,4.5 L-4.5,2.95 L-1.55,0Z" fill="#fdfdfd" stroke="#5c5c5c" stroke-width="0.9" stroke-linejoin="round"/></svg>
<svg style="left:863.00px;top:80.30px" width="10" height="4" viewBox="0 0 10 4"><rect x="0.5" y="0.5" width="8.6" height="2.4" rx="0.2" fill="#fff" stroke="#555" stroke-width="0.9"/></svg>
<svg style="left:884.60px;top:79.90px" width="10" height="10" viewBox="0 0 10 10"><rect x="0.5" y="0.5" width="8.4" height="8.2" fill="#fff" stroke="#555" stroke-width="0.9"/><line x1="0.5" y1="2.4" x2="8.9" y2="2.4" stroke="#555" stroke-width="0.9"/></svg>
<div class="a" style="left:228.6px;top:96.3px;width:10.6px;height:13.3px;background:#dbe9f9;border-top:1.4px dashed #2f7ad6;border-bottom:1.4px dashed #2f7ad6;box-sizing:border-box"></div>
<svg style="left:228.10px;top:96.80px" width="12" height="12" viewBox="-6 -6 12 12"><circle cx="0" cy="0" r="4.6" fill="url(#gR)" stroke="#d8504a" stroke-width="0.6"/><path d="M-1.5,-2.0 L1.7,2.0 M2.0,-2.0 L-1.9,2.0" stroke="#fff" stroke-width="1.25" stroke-linecap="round"/></svg>
<svg style="left:228.10px;top:110.00px" width="12" height="12" viewBox="-6 -6 12 12"><circle cx="0" cy="0" r="4.6" fill="url(#gR)" stroke="#d8504a" stroke-width="0.6"/><path d="M-1.5,-2.0 L1.7,2.0 M2.0,-2.0 L-1.9,2.0" stroke="#fff" stroke-width="1.25" stroke-linecap="round"/></svg>
<svg style="left:228.10px;top:123.60px" width="12" height="12" viewBox="-6 -6 12 12"><circle cx="0" cy="0" r="4.6" fill="url(#gR)" stroke="#d8504a" stroke-width="0.6"/><path d="M-1.5,-2.0 L1.7,2.0 M2.0,-2.0 L-1.9,2.0" stroke="#fff" stroke-width="1.25" stroke-linecap="round"/></svg>
<svg style="left:876.60px;top:98.00px" width="12" height="12" viewBox="-6 -6 12 12"><polyline points="-3.4,1.7 0,-1.7 3.4,1.7" fill="none" stroke="#b0b0b0" stroke-width="1.5"/></svg>
<svg style="left:876.60px;top:481.60px" width="12" height="12" viewBox="-6 -6 12 12"><polyline points="-3.4,-1.7 0,1.7 3.4,-1.7" fill="none" stroke="#b0b0b0" stroke-width="1.5"/></svg>
<svg style="left:261.60px;top:496.60px" width="12" height="12" viewBox="-6 -6 12 12"><polyline points="1.6,-3.2 -1.6,0 1.6,3.2" fill="none" stroke="#b0b0b0" stroke-width="1.5"/></svg>
<svg style="left:861.80px;top:496.60px" width="12" height="12" viewBox="-6 -6 12 12"><polyline points="-1.6,-3.2 1.6,0 -1.6,3.2" fill="none" stroke="#b0b0b0" stroke-width="1.5"/></svg>
<svg style="left:231.80px;top:519.60px" width="14.34" height="14.34" viewBox="0 0 16 16"><rect x="1" y="1" width="12.6" height="12" fill="#e8f0fb" stroke="#8fa9cf" stroke-width="0.9"/><circle cx="4.6" cy="4.8" r="2.8" fill="#e0242c"/><path d="M7,9 h5 M3,11.6 h9" stroke="#8fa9cf" stroke-width="1"/></svg>
<svg style="left:366.80px;top:519.00px" width="14.34" height="14.34" viewBox="0 0 16 16"><path d="M2.5,1.5 h6.5 l3,3 v10 h-9.5z" fill="#fffdf2" stroke="#b39b62" stroke-width="1"/><path d="M5,6 h3 M5,8.4 h5 M5,10.8 h3" stroke="#3f7ac0" stroke-width="1"/></svg>
<svg style="left:448.80px;top:519.60px" width="14.34" height="14.34" viewBox="0 0 16 16"><rect x="1" y="1.4" width="12.4" height="11" rx="1" fill="#fff" stroke="#2d5fa8" stroke-width="1.5"/><path d="M3.4,5 h5.4 M3.4,7.6 h7.4" stroke="#2d5fa8" stroke-width="1.1"/></svg>
<svg style="left:509.80px;top:521.30px" width="12" height="12" viewBox="-6 -6 12 12"><path d="M-4.5,-2.95 L-2.95,-4.5 L0,-1.55 L2.95,-4.5 L4.5,-2.95 L1.55,0 L4.5,2.95 L2.95,4.5 L0,1.55 L-2.95,4.5 L-4.5,2.95 L-1.55,0Z" fill="#fdfdfd" stroke="#5c5c5c" stroke-width="0.9" stroke-linejoin="round"/></svg>
<svg style="left:594.80px;top:520.80px" width="14.34" height="14.34" viewBox="0 0 16 16"><rect x="1" y="1" width="10" height="10" rx="1" fill="#b4b4b4" stroke="#9c9c9c" stroke-width="1"/></svg>
<svg style="left:614.00px;top:518.60px" width="14.34" height="14.34" viewBox="0 0 16 16"><path d="M2,1.6 L12.6,12.6 M12.6,1.6 L2,12.6" stroke="#6e6e6e" stroke-width="2.8"/></svg>
<svg style="left:633.00px;top:518.60px" width="14.34" height="14.34" viewBox="0 0 16 16"><path d="M1,3 L10,13 M10,3 L1,13" stroke="#6e6e6e" stroke-width="2.4"/><path d="M7,0.6 L16,10 M16,0.6 L7,10" stroke="#8a8a8a" stroke-width="2"/></svg>
<div class="a" style="left:653.40px;top:518.40px;width:1px;height:9.60px;background:#a8a8a8"></div>
<svg style="left:662.40px;top:518.60px" width="14.34" height="14.34" viewBox="0 0 16 16"><path d="M2,1.5 h7 l3,3 v10 h-10z" fill="#fffdf2" stroke="#c9a44c" stroke-width="1"/><path d="M4,6 h5 M4,8.4 h6" stroke="#5d86c4" stroke-width="1"/></svg>
<svg style="left:683.00px;top:518.60px" width="14.34" height="14.34" viewBox="0 0 16 16"><rect x="1" y="1.4" width="13" height="12" fill="#fff" stroke="#8a8a8a" stroke-width="0.9"/><rect x="9.6" y="2" width="3.6" height="4" fill="#2d5fa8"/><path d="M2.6,12 v-4 h3 v4" stroke="#2d5fa8" stroke-width="1.4" fill="none"/></svg>
<svg style="left:703.60px;top:518.60px" width="14.34" height="14.34" viewBox="0 0 16 16"><path d="M2,1.5 h7 l3,3 v10 h-10z" fill="#fffdf2" stroke="#c9a44c" stroke-width="1"/><path d="M4,6 h5 M4,8.4 h6" stroke="#5d86c4" stroke-width="1"/><path d="M9,9 l5,-4 v8z" fill="#f3b928" stroke="#d0941c" stroke-width="0.6"/></svg>
<div class="a" style="left:721.00px;top:516.20px;width:41.20px;height:17.80px;background:#cce4f7;border:1px solid #99c9ef;box-sizing:border-box"></div>
<div class="a" style="left:741.80px;top:516.60px;width:1px;height:11.40px;background:#99c9ef"></div>
<svg style="left:725.80px;top:519.20px" width="14.34" height="14.34" viewBox="0 0 16 16"><rect x="3.6" y="1" width="11" height="8.4" fill="#fff" stroke="#3f6fb4" stroke-width="1.2"/><path d="M5.6,4 h5 M5.6,6.2 h7" stroke="#3f6fb4" stroke-width="0.9"/><path d="M1,10.4 h9" stroke="#555" stroke-width="1.2"/></svg>
<svg style="left:746.00px;top:519.20px" width="14.34" height="14.34" viewBox="0 0 16 16"><rect x="3.6" y="1" width="11" height="8.4" fill="#fff" stroke="#3f6fb4" stroke-width="1.2"/><path d="M6,3.4 l3,3.6 M9,3.4 l-3,3.6" stroke="#e0242c" stroke-width="1.4"/><rect x="10.6" y="3.4" width="1.4" height="3.6" fill="#e0242c"/><path d="M1,10.4 h9" stroke="#555" stroke-width="1.2"/></svg>
<div class="a" style="left:763.80px;top:518.40px;width:1px;height:9.60px;background:#a8a8a8"></div>
<svg style="left:772.60px;top:519.00px" width="14.34" height="14.34" viewBox="0 0 16 16"><rect x="0.8" y="7.6" width="11" height="8" fill="#fff" stroke="#2d5fa8" stroke-width="1.2"/><g transform="rotate(40 11.4 4)"><rect x="9.4" y="0.2" width="4.4" height="6" rx="1.2" fill="#2f9e44" stroke="#1b7a30" stroke-width="0.6"/><rect x="8.6" y="6" width="6" height="1.4" fill="#1b7a30"/></g></svg>
<svg style="left:794.80px;top:518.60px" width="14.34" height="14.34" viewBox="0 0 16 16"><rect x="1" y="1.4" width="11.6" height="11" rx="1" fill="#fff" stroke="#8a8a8a" stroke-width="1.4"/><path d="M3.4,5 h4.4 M3.4,7.6 h6.4" stroke="#9a9a9a" stroke-width="1.1"/></svg>
<svg style="left:814.20px;top:524.20px" width="6.8" height="4" viewBox="0 0 7 4"><path d="M0,0 L7,0 L3.5,4Z" fill="#7a7a7a"/></svg>
<svg style="left:827.60px;top:518.60px" width="14.34" height="14.34" viewBox="0 0 16 16"><rect x="0.8" y="3.8" width="12.6" height="10.6" fill="url(#gW)" stroke="#a89468" stroke-width="1"/><rect x="1.3" y="4.3" width="11.6" height="2.6" fill="url(#gB)"/><path d="M12.6,0.1599999999999997 L14.058,1.9419999999999997 L15.84,3.4 L14.058,4.8580000000000005 L12.6,6.640000000000001 L11.142,4.8580000000000005 L9.36,3.4 L11.142,1.9419999999999997Z" fill="#fff1a8" stroke="#c9a030" stroke-width="1"/><path d="M12.6,1.456 L13.3128,3.4 L12.6,5.343999999999999 L11.8872,3.4Z" fill="#fffef4"/></svg>
<svg style="left:847.80px;top:524.20px" width="6.8" height="4" viewBox="0 0 7 4"><path d="M0,0 L7,0 L3.5,4Z" fill="#1a1a1a"/></svg>
<svg style="left:863.00px;top:521.40px" width="10" height="4" viewBox="0 0 10 4"><rect x="0.5" y="0.5" width="8.6" height="2.4" rx="0.2" fill="#fff" stroke="#555" stroke-width="0.9"/></svg>
<svg style="left:884.40px;top:521.00px" width="10" height="10" viewBox="0 0 10 10"><rect x="0.5" y="0.5" width="8.4" height="8.2" fill="#fff" stroke="#555" stroke-width="0.9"/><line x1="0.5" y1="2.4" x2="8.9" y2="2.4" stroke="#555" stroke-width="0.9"/></svg>
</body></html>
